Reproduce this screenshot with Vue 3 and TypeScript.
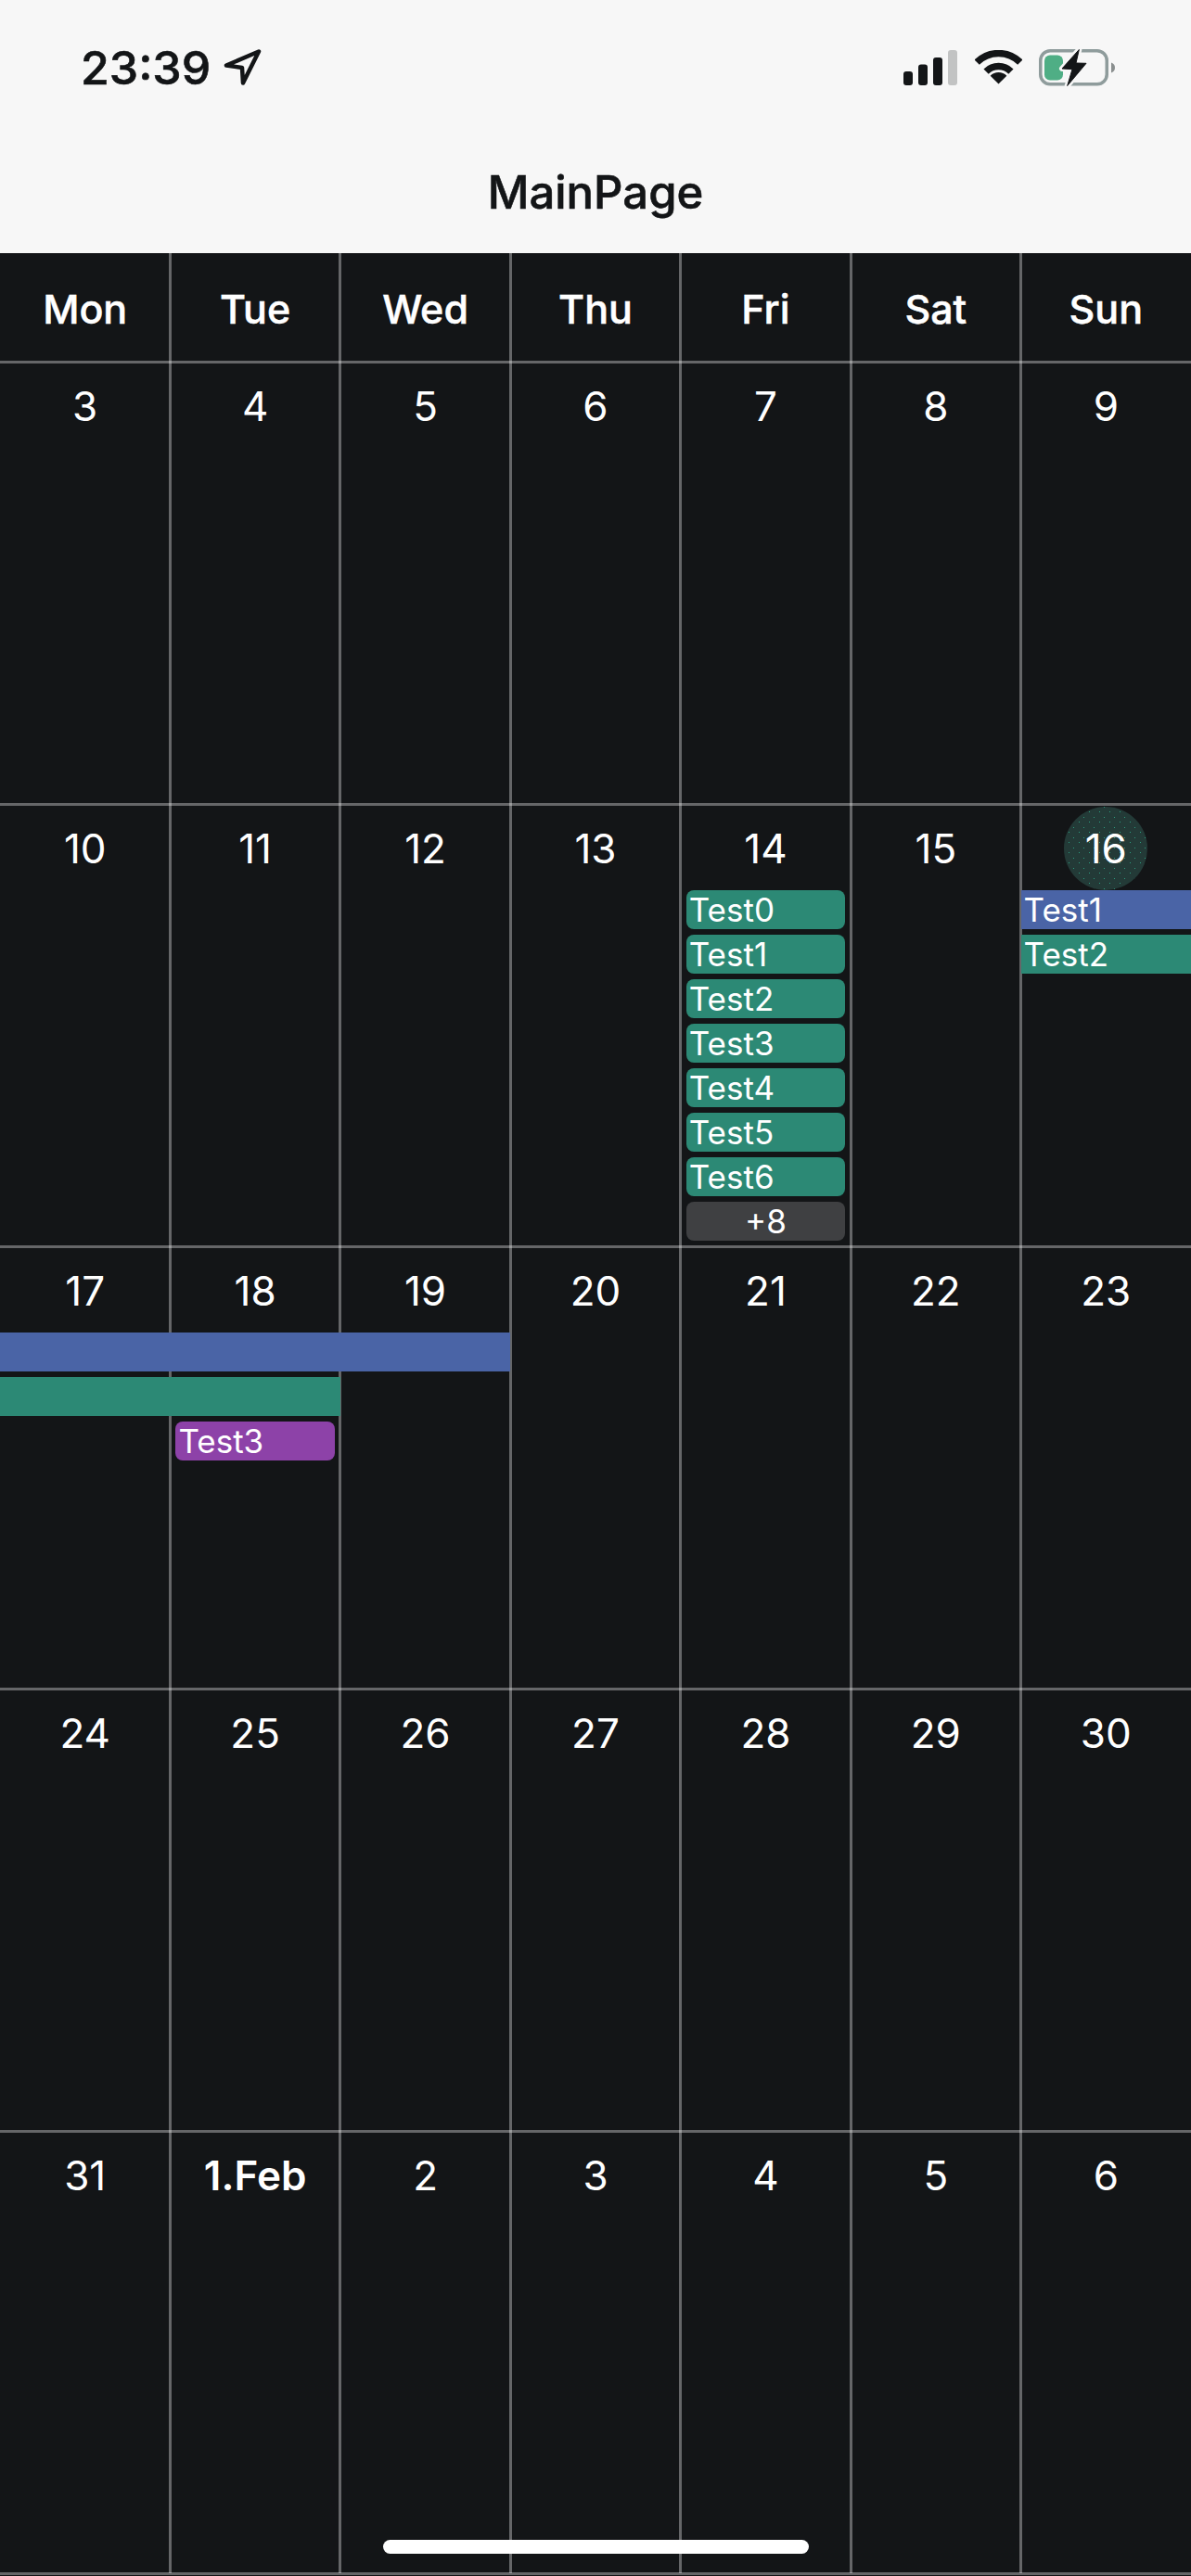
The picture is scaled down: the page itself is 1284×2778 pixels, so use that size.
<template>
  <div class="page">
    <header class="nav">
      <div class="status">
        <div class="status-left">
          <span class="time">23:39</span>
          <svg class="arrow" width="41" height="41" viewBox="0 0 41 41">
            <path d="M38 3.5 L3 18.5 L20 21 L21 37.5 Z" fill="none" stroke="#131517" stroke-width="4.5" stroke-linejoin="round" />
          </svg>
        </div>
        <div class="status-right">
          <svg width="59" height="38" viewBox="0 0 59 38">
            <rect x="0" y="23" width="10" height="15" rx="3" fill="#131517" />
            <rect x="16" y="15.5" width="10" height="22.5" rx="3" fill="#131517" />
            <rect x="32" y="8" width="10" height="30" rx="3" fill="#131517" />
            <rect x="48" y="0" width="10" height="38" rx="3" fill="#c2c3c3" />
          </svg>
          <svg width="51" height="38" viewBox="0 0 51 38">
            <path d="M2.2 13.2 A33 33 0 0 1 48.8 13.2" fill="none" stroke="#131517" stroke-width="7.5" />
            <path d="M12.1 23.1 A19 19 0 0 1 38.9 23.1" fill="none" stroke="#131517" stroke-width="7.5" />
            <path d="M25.5 36.5 L16.66 27.66 A12.5 12.5 0 0 1 34.34 27.66 Z" fill="#131517" />
          </svg>
          <svg width="82" height="40" viewBox="0 0 82 40">
            <rect x="1.75" y="1.75" width="71.5" height="36" rx="10.5" fill="none" stroke="#8f9c9c" stroke-width="3.5" />
            <rect x="6" y="6.5" width="20" height="27" rx="6" fill="#4fae85" />
            <path d="M78 14.5 C81 15.5 82 17.5 82 20 C82 22.5 81 24.5 78 25.5 Z" fill="#8a8f8f" />
            <path d="M43.3 0.5 L25 21 L36 21.7 L30.7 39.5 L51 15.3 L40 15 Z" fill="#f7f7f7" stroke="#f7f7f7" stroke-width="6" stroke-linejoin="round" />
            <path d="M43.3 0.5 L25 21 L36 21.7 L30.7 39.5 L51 15.3 L40 15 Z" fill="#131517" stroke="#131517" stroke-width="1" stroke-linejoin="round" />
          </svg>
        </div>
      </div>
      <div class="title">MainPage</div>
    </header>

    <main class="calendar">
      <div class="row row--head">
        <div v-for="day in weekdays" :key="day" class="cell head-cell">{{ day }}</div>
      </div>
      <div v-for="(week, w) in weeks" :key="w" class="row row--week">
        <div v-for="day in week" :key="day.label" class="cell">
          <div class="date-wrap">
            <span class="date" :class="{ 'date--today': day.today, 'date--month': day.month }">{{ day.label }}</span>
          </div>
          <div
            v-for="(ev, i) in day.events"
            :key="i"
            class="event"
            :class="[`event--${ev.color}`, { 'event--span': ev.span, 'event--more': ev.color === 'more' }]"
          >{{ ev.text }}</div>
        </div>
      </div>
    </main>

    <div class="home-bar"></div>
  </div>
</template>

<script setup lang="ts">
interface CalEvent {
  text: string
  color: 'teal' | 'blue' | 'purple' | 'more'
  span?: boolean
}

interface Day {
  label: string
  today?: boolean
  month?: boolean
  events?: CalEvent[]
}

const weekdays = ['Mon', 'Tue', 'Wed', 'Thu', 'Fri', 'Sat', 'Sun']

const plain = (from: number): Day[] =>
  Array.from({ length: 7 }, (_, i) => ({ label: String(from + i) }))

const week2 = plain(10)
week2[4].events = [
  ...[0, 1, 2, 3, 4, 5, 6].map((n): CalEvent => ({ text: `Test${n}`, color: 'teal' })),
  { text: '+8', color: 'more' },
]
week2[6].today = true
week2[6].events = [
  { text: 'Test1', color: 'blue', span: true },
  { text: 'Test2', color: 'teal', span: true },
]

const week3 = plain(17)
week3[0].events = [
  { text: '', color: 'blue', span: true },
  { text: '', color: 'teal', span: true },
]
week3[1].events = [
  { text: '', color: 'blue', span: true },
  { text: '', color: 'teal', span: true },
  { text: 'Test3', color: 'purple' },
]
week3[2].events = [{ text: '', color: 'blue', span: true }]

const week5: Day[] = [
  { label: '31' },
  { label: '1.Feb', month: true },
  ...[2, 3, 4, 5, 6].map((n) => ({ label: String(n) })),
]

const weeks: Day[][] = [plain(3), week2, week3, plain(24), week5]
</script>

<style>
html,
body {
  margin: 0;
  background: #131517;
}
</style>

<style scoped>
.page {
  position: relative;
  width: 1284px;
  height: 2778px;
  overflow: hidden;
  background: #131517;
  font-family: Inter, "Liberation Sans", sans-serif;
}

/* Nav */
.nav {
  height: 273px;
  background: #f7f7f7;
  color: #131517;
  display: flex;
  flex-direction: column;
}

.status {
  height: 145px;
  display: flex;
  align-items: center;
  justify-content: space-between;
  padding: 0 82px 0 87px;
  box-sizing: border-box;
}

.status-left {
  display: flex;
  align-items: center;
  gap: 14px;
}

.status-right {
  display: flex;
  align-items: center;
  gap: 18px;
}

.time {
  font-size: 50px;
  font-weight: 500;
  -webkit-text-stroke: 0.6px #131517;
  line-height: 1;
}

.title {
  flex: 1;
  display: flex;
  align-items: center;
  justify-content: center;
  padding-bottom: 4px;
  font-size: 49px;
  font-weight: 500;
  -webkit-text-stroke: 0.6px #131517;
}

/* Calendar */
.row {
  position: relative;
  display: grid;
  grid-template-columns: repeat(7, 1fr);
}

.row::after {
  content: "";
  position: absolute;
  left: 0;
  right: 0;
  bottom: -1.5px;
  height: 3px;
  background: rgba(255, 255, 255, 0.35);
}

.row--head {
  height: 117px;
}

.row--week {
  height: 477px;
}

.cell {
  position: relative;
  min-width: 0;
  color: #fff;
}

.cell:not(:last-child)::after {
  content: "";
  position: absolute;
  top: 0;
  bottom: 0;
  right: -1.5px;
  width: 3px;
  background: rgba(255, 255, 255, 0.35);
}

.head-cell {
  display: flex;
  align-items: center;
  justify-content: center;
  padding-top: 2px;
  font-size: 43px;
  font-weight: 500;
  -webkit-text-stroke: 0.5px #fff;
}

.date-wrap {
  height: 90px;
  padding-top: 3px;
  display: flex;
  justify-content: center;
}

.date {
  width: 90px;
  height: 90px;
  border-radius: 50%;
  display: flex;
  align-items: center;
  justify-content: center;
  font-size: 44px;
  white-space: nowrap;
}

.date--today {
  background-color: #233a37;
  background-image:
    radial-gradient(circle, #2a9d80 0.7px, transparent 1px),
    radial-gradient(circle, #2a9d80 0.7px, transparent 1px);
  background-size: 11px 11px;
  background-position: 0 0, 5px 6px;
}

.date--month {
  font-weight: 600;
}

/* Events */
.event {
  position: relative;
  z-index: 1;
  height: 42px;
  line-height: 42px;
  margin: 0 6px 6px;
  padding-left: 3px;
  border-radius: 8px;
  font-size: 35px;
  color: #fff;
  overflow: hidden;
  white-space: nowrap;
}

.event--teal {
  background: #2c8975;
}

.event--blue {
  background: #4a64a6;
}

.event--purple {
  background: #8d42a8;
}

.event--more {
  background: #3f4042;
  text-align: center;
  padding-left: 0;
}

.event--span {
  margin-left: 0;
  margin-right: 0;
  border-radius: 0;
}

.home-bar {
  position: absolute;
  z-index: 2;
  left: 413px;
  top: 2739px;
  width: 459px;
  height: 15px;
  border-radius: 8px;
  background: #fff;
}
</style>
